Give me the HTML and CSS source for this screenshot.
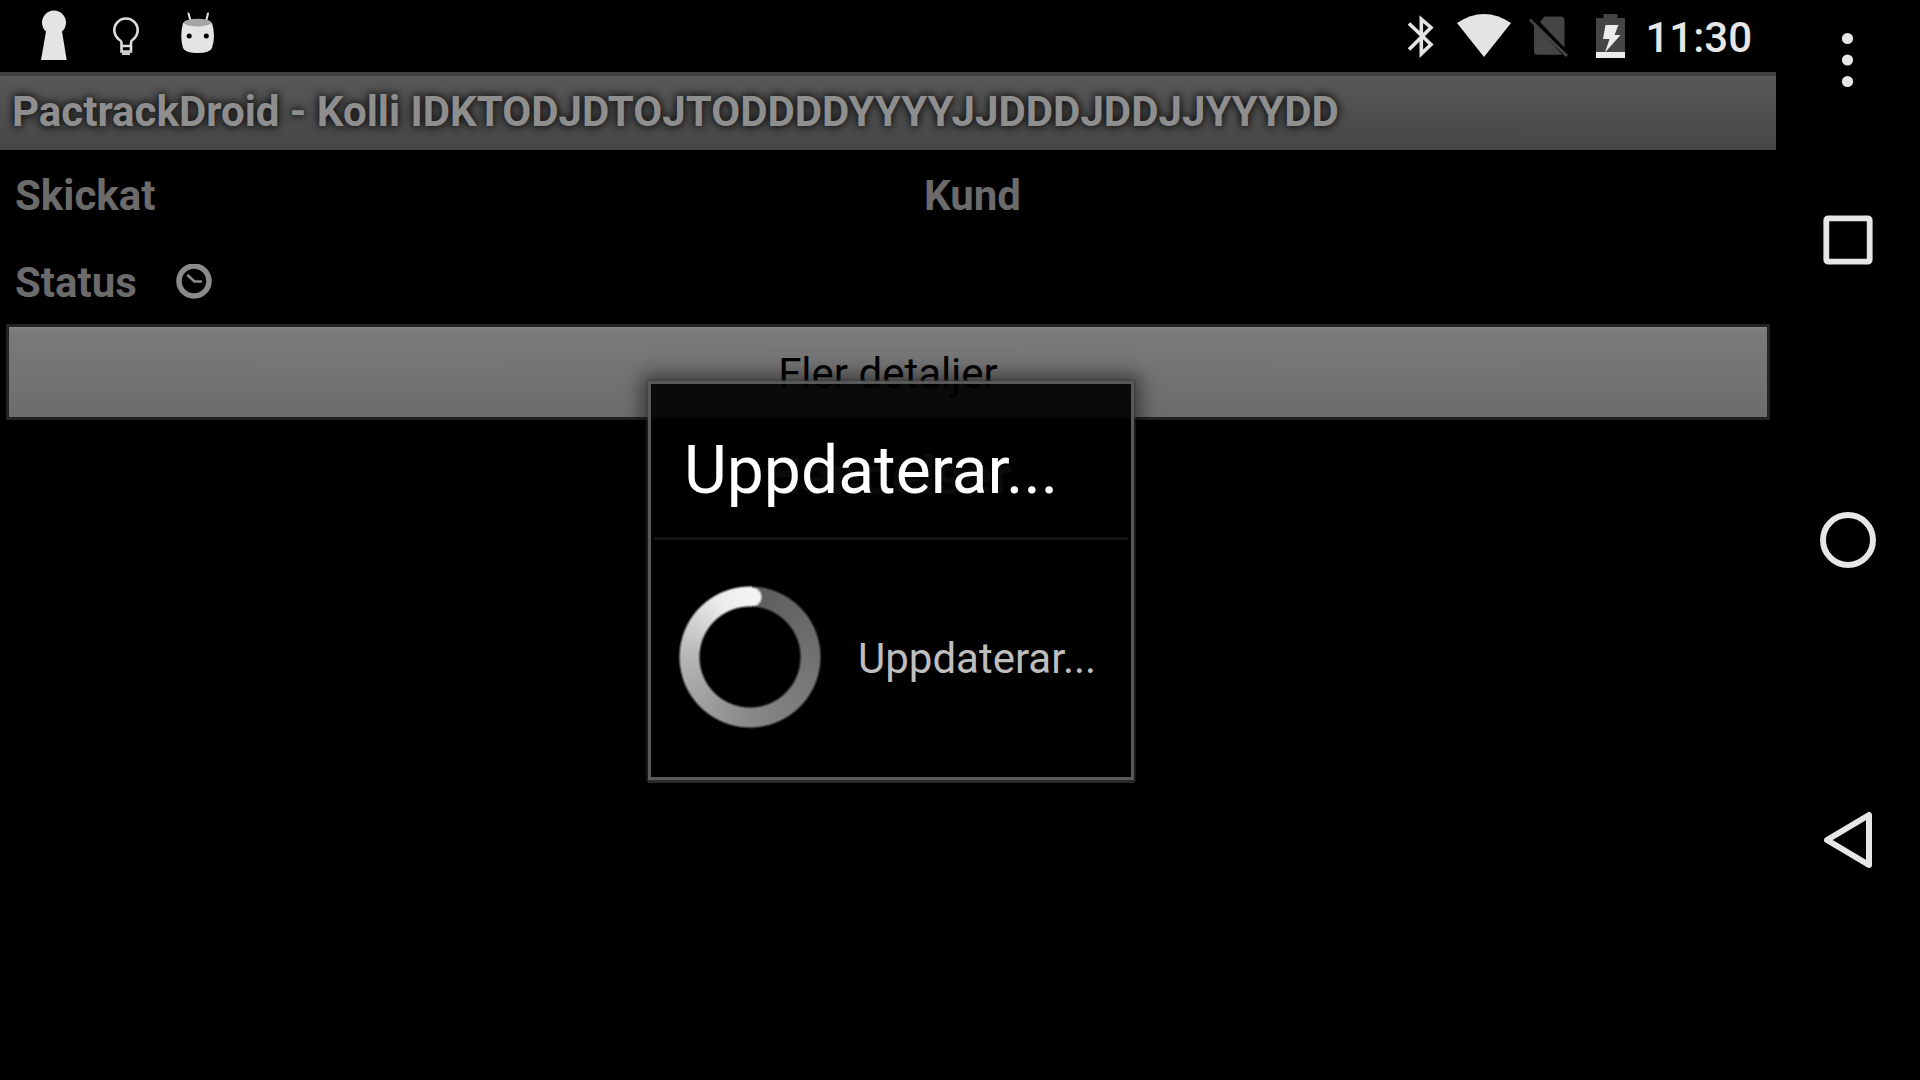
FILE: index.html
```html
<!DOCTYPE html>
<html lang="sv">
<head>
<meta charset="utf-8">
<title>PactrackDroid</title>
<meta name="viewport" content="width=device-width, initial-scale=1">
<link rel="stylesheet" href="styles.css">
</head>
<body>
<div class="device">
  <div class="screen">
    <header class="status-bar">
      <div class="notifications">
        <svg class="icon" width="72" height="72" viewBox="0 0 72 72" aria-hidden="true">
          <path fill="#e4e4e4" d="M28 31.500a12 12 0 1 1 16 0L48.700 60H23Z" transform="translate(18 0)"/>
        </svg>
        <svg class="icon" width="72" height="72" viewBox="0 0 72 72" aria-hidden="true">
          <path fill="none" stroke="#dcdcdc" stroke-width="2.600" d="M31.500 51.500V42.500Q31.500 41 29 39.500A11.700 11.700 0 1 1 43 39.500Q41 41 41 42.500V51.500ZM31 46H41" transform="translate(18 0)"/>
          <path fill="#c9cdc9" d="M49 51h11v1.500h-2V55h-8v-2.500h-1z"/>
        </svg>
        <svg class="icon" width="72" height="72" viewBox="0 0 72 72" aria-hidden="true">
          <path stroke="#e4e4e4" stroke-width="2" stroke-linecap="round" d="M44.500 13.500l2.200 8M64 13.500l-2 8"/>
          <path fill="#e4e4e4" d="M39 23Q53 18 68 23Q72 36 68 48Q66 53 53.500 53T39 48Q35.500 36 39 23Z"/>
          <ellipse cx="53.500" cy="22.600" rx="14" ry="3.800" fill="#a5a5a5"/>
          <circle cx="45.200" cy="36" r="2.500"/><circle cx="62.300" cy="36" r="2.500"/>
        </svg>
      </div>
      <div class="system">
        <svg class="icon" width="28" height="44" viewBox="0 0 28 44" aria-label="Bluetooth" role="img">
          <path fill="none" stroke="#e4e4e4" stroke-width="3.600" d="M2 9.500L24 30.500 14.300 39.800V5.200L24 13.500 2 35.500"/>
        </svg>
        <svg class="icon wifi" width="54" height="44" viewBox="0 0 54 44" aria-label="Wi-Fi" role="img">
          <path fill="#e4e4e4" d="M0 9Q27-9 54 9L27 43Z"/>
        </svg>
        <svg class="icon sim" width="40" height="44" viewBox="0 0 40 44" aria-label="Inget SIM" role="img">
          <path fill="#454545" d="M15.500 2.500H32Q35.500 2.500 35.500 6V34L11 8ZM5 10.500L33.500 40.800H8.500Q5 40.800 5 37.500Z"/>
          <path stroke="#454545" stroke-width="3" d="M1 5.500L38 42"/>
          <path stroke="#000" stroke-width="3" d="M4 4.500L38 38"/>
        </svg>
        <svg class="icon battery" width="29" height="44" viewBox="0 0 29 44" aria-label="Batteriet laddas" role="img">
          <path fill="#454545" d="M7.500 0H21.500V4H29V44H0V4H7.500Z"/>
          <path fill="#ececec" d="M0 38H29V44H0ZM9.500 11H22.500L18.500 21H24.500L9 38.500 13.500 25H7Z"/>
        </svg>
        <time class="clock" datetime="11:30">11:30</time>
      </div>
    </header>

    <main class="app">
      <h1 class="title">PactrackDroid - Kolli IDKTODJDTOJTODDDDYYYYJJDDDJDDJJYYYDD</h1>
      <div class="details">
        <div class="field">Skickat</div>
        <div class="field">Kund</div>
        <div class="field">Status
          <svg class="icon" width="38" height="38" viewBox="0 0 38 38" aria-hidden="true">
            <circle cx="19" cy="17" r="15" fill="none" stroke="#8b8b8b" stroke-width="5.500"/>
            <path fill="none" stroke="#8b8b8b" stroke-width="2.500" stroke-linecap="round" stroke-linejoin="round" d="M13 11.500L19.500 17.500H26"/>
          </svg>
        </div>
      </div>
      <button class="more" type="button">Fler detaljer</button>
      <h2 class="events">Händelser</h2>

      <div class="overlay">
        <section class="dialog" role="dialog" aria-labelledby="dialog-title">
          <h2 class="dialog-title" id="dialog-title">Uppdaterar...</h2>
          <div class="dialog-body">
            <div class="spinner"></div>
            <p class="message">Uppdaterar...</p>
          </div>
        </section>
      </div>
    </main>
  </div>

  <nav class="nav">
    <button class="nav-button" type="button" aria-label="Meny">
      <svg class="icon" width="60" height="60" viewBox="0 0 60 60" fill="#e6e6e6"><circle cx="29.500" cy="8.500" r="5.600"/><circle cx="29.500" cy="30" r="5.600"/><circle cx="29.500" cy="51.500" r="5.600"/></svg>
    </button>
    <div class="nav-main">
      <button class="nav-button" type="button" aria-label="Senaste">
        <svg class="icon" width="60" height="60" viewBox="0 0 60 60"><rect x="8.300" y="8.300" width="43.400" height="43.400" rx="2" fill="none" stroke="#e6e6e6" stroke-width="5.800"/></svg>
      </button>
      <button class="nav-button" type="button" aria-label="Hem">
        <svg class="icon" width="60" height="60" viewBox="0 0 60 60"><circle cx="30" cy="30" r="25" fill="none" stroke="#e6e6e6" stroke-width="6"/></svg>
      </button>
      <button class="nav-button" type="button" aria-label="Tillbaka">
        <svg class="icon" width="60" height="60" viewBox="0 0 60 60"><path d="M51 5V55L9 30Z" fill="none" stroke="#e6e6e6" stroke-width="6" stroke-linejoin="round"/></svg>
      </button>
    </div>
  </nav>
</div>
</body>
</html>
```
FILE: styles.css
```css
* {
  box-sizing: border-box;
}

body {
  margin: 0;
  background: #000;
  color: #6b6b6b;
  font-family: Roboto, "Liberation Sans", sans-serif;
  font-size: 42px;
  line-height: 48px;
}

h1,
h2,
p {
  margin: 0;
}

button {
  font: inherit;
}

.icon {
  display: block;
  flex: none;
}

.device {
  display: flex;
  min-height: 100vh;
}

.screen {
  display: flex;
  flex: 1;
  flex-direction: column;
  min-width: 0;
}

/* Status bar */
.status-bar {
  display: flex;
  justify-content: space-between;
  height: 72px;
  padding-right: 24px;
}

.notifications,
.system {
  display: flex;
  align-items: center;
}

.wifi {
  margin-left: 22px;
}

.sim {
  margin-left: 18px;
}

.battery {
  margin-left: 27px;
}

.clock {
  margin-left: 20px;
  padding-top: 3px;
  color: #e6e6e6;
  font-weight: 500;
}

/* Application */
.app {
  position: relative;
  flex: 1;
}

.title {
  overflow: hidden;
  height: 78px;
  padding: 12px;
  border-top: 4px solid #404040;
  background: linear-gradient(#585858, #464646);
  color: #8e8e8e;
  font-size: 42px;
  font-weight: 700;
  text-shadow: 0 0 9px #111, 0 0 9px #222;
  white-space: nowrap;
}

.details {
  display: grid;
  grid-template-columns: 909fr 867fr;
  grid-auto-rows: 87px;
  font-weight: 700;
}

.field {
  display: flex;
  align-items: center;
  gap: 38px;
  padding: 4px 0 0 15px;
}

.more {
  display: block;
  width: calc(100% - 12px);
  height: 96px;
  margin: 0 6px;
  padding: 3px 0 0;
  border: 3px solid #222;
  background: linear-gradient(#858585, #7b7b7b 3px, #6c6c6c);
  color: #000;
}

.events {
  padding-top: 24px;
  color: #6b6b6b;
  font-size: 54px;
  line-height: 64px;
  text-align: center;
}

/* Progress dialog */
.overlay {
  position: absolute;
  inset: 0;
  display: flex;
  align-items: center;
  justify-content: center;
  padding: 9px 0 0 6px;
}

.dialog {
  width: 486px;
  border: 3px solid #585858;
  background: rgba(0, 0, 0, 0.91);
  box-shadow: 0 3px 0 #2a2a2a, 0 0 0 2px rgba(60, 60, 60, 0.4), 0 0 18px 6px rgba(0, 0, 0, 0.5);
}

.dialog-title {
  margin: 0 3px;
  padding: 48px 30px 27px;
  border-bottom: 3px solid #141414;
  color: #fff;
  font-size: 66px;
  font-weight: 400;
  line-height: 78px;
}

.dialog-body {
  display: flex;
  align-items: center;
  gap: 36px;
  padding: 45px 24px 48px 27px;
}

.spinner {
  flex: none;
  width: 144px;
  height: 144px;
  border-radius: 50%;
  background:
    radial-gradient(circle at 74px 12px, #f2f2f2 8px, transparent 11px),
    conic-gradient(from 2deg, #5c5c5c, #868686 48%, #b4b4b4 74%, #ededed 92%, #f4f4f4);
  mask: radial-gradient(circle, transparent 49px, #000 52px, #000 69px, transparent 72px);
}

.message {
  padding-top: 3px;
  color: #bebebe;
}

/* Navigation bar */
.nav {
  display: grid;
  grid-template-rows: 120px 1fr 120px;
  width: 144px;
}

.nav-main {
  display: flex;
  flex-direction: column;
  justify-content: space-between;
}

.nav-button {
  display: grid;
  place-items: center;
  width: 100%;
  height: 120px;
  padding: 0;
  border: 0;
  background: none;
}

.nav-main .nav-button {
  height: 240px;
}
```
